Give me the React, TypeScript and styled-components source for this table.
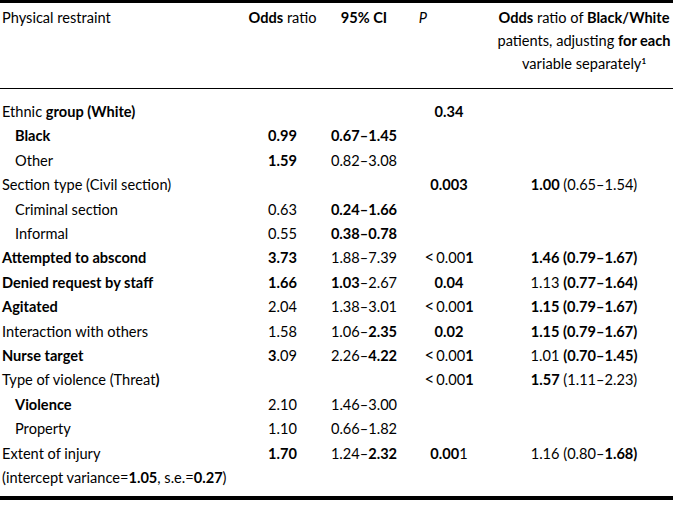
import * as React from "react";
import styled, { createGlobalStyle } from "styled-components";

const GlobalStyle = createGlobalStyle`
  html, body {
    margin: 0;
    padding: 0;
    background: #ffffff;
  }
  body {
    font-family: Lato, "Open Sans", "DejaVu Sans", sans-serif;
    color: #000000;
  }
`;

const Wrapper = styled.div`
  width: 673px;
`;

const Table = styled.table`
  width: 100%;
  table-layout: fixed;
  border-collapse: collapse;
  border-top: 3px solid #000000;
  border-bottom: 4px solid #000000;
  font-size: 14.6px;
`;

const HeadRow = styled.tr`
  border-bottom: 1px solid #000000;
`;

const HeadCell = styled.th<{ $align?: string; $italic?: boolean }>`
  font-weight: 400;
  font-style: ${(p) => (p.$italic ? "italic" : "normal")};
  text-align: ${(p) => p.$align || "center"};
  vertical-align: top;
  line-height: 23px;
  padding: 3px 2px 13px 2px;
`;

const Row = styled.tr<{ $first?: boolean; $last?: boolean }>`
  height: 24.4px;
  td {
    padding-top: ${(p) => (p.$first ? "11px" : "0")};
    padding-bottom: ${(p) => (p.$last ? "5px" : "0")};
  }
`;

const LabelCell = styled.td<{ $indent?: boolean }>`
  text-align: left;
  white-space: nowrap;
  line-height: 24.4px;
  padding-left: ${(p) => (p.$indent ? "15px" : "2px")} !important;
`;

const NumCell = styled.td`
  text-align: center;
  white-space: nowrap;
  line-height: 24.4px;
`;

const B = styled.span`
  font-weight: 700;
`;

const Less = styled.span`
  font-size: 17px;
  line-height: 0;
  margin-right: 2px;
`;

const Sup = styled.sup`
  font-size: 8px;
  font-weight: 700;
  vertical-align: 5px;
  line-height: 0;
`;

type RowData = {
  label: React.ReactNode;
  indent?: boolean;
  or?: React.ReactNode;
  ci?: React.ReactNode;
  p?: React.ReactNode;
  adj?: React.ReactNode;
};

const lt = (
  <>
    <Less>&lt;</Less>0.00<B>1</B>
  </>
);

const rows: RowData[] = [
  { label: <>Ethnic <B>group (White)</B></>, p: <B>0.34</B> },
  { label: <B>Black</B>, indent: true, or: <B>0.99</B>, ci: <B>0.67–1.45</B> },
  { label: "Other", indent: true, or: <B>1.59</B>, ci: "0.82–3.08" },
  {
    label: "Section type (Civil section)",
    p: <B>0.003</B>,
    adj: <><B>1.00</B> (0.65–1.54)</>,
  },
  { label: "Criminal section", indent: true, or: "0.63", ci: <B>0.24–1.66</B> },
  { label: "Informal", indent: true, or: "0.55", ci: <B>0.38–0.78</B> },
  {
    label: <B>Attempted to abscond</B>,
    or: <B>3.73</B>,
    ci: "1.88–7.39",
    p: lt,
    adj: <B>1.46 (0.79–1.67)</B>,
  },
  {
    label: <B>Denied request by staff</B>,
    or: <B>1.66</B>,
    ci: <><B>1.03</B>–2.67</>,
    p: <B>0.04</B>,
    adj: <>1.13 <B>(0.77–1.64)</B></>,
  },
  {
    label: <B>Agitated</B>,
    or: "2.04",
    ci: "1.38–3.01",
    p: lt,
    adj: <B>1.15 (0.79–1.67)</B>,
  },
  {
    label: "Interaction with others",
    or: "1.58",
    ci: <>1.06–<B>2.35</B></>,
    p: <B>0.02</B>,
    adj: <B>1.15 (0.79–1.67)</B>,
  },
  {
    label: <B>Nurse target</B>,
    or: <><B>3</B>.09</>,
    ci: <>2.26–<B>4.22</B></>,
    p: lt,
    adj: <>1.01 <B>(0.70–1.45)</B></>,
  },
  {
    label: <>Type of violence (Threat<B>)</B></>,
    p: lt,
    adj: <><B>1.57</B> (1.11–2.23)</>,
  },
  { label: <B>Violence</B>, indent: true, or: "2.10", ci: "1.46–3.00" },
  { label: "Property", indent: true, or: "1.10", ci: "0.66–1.82" },
  {
    label: "Extent of injury",
    or: <B>1.70</B>,
    ci: <>1.24–<B>2.32</B></>,
    p: <><B>0.00</B>1</>,
    adj: <>1.16 (0.80–<B>1.68)</B></>,
  },
  {
    label: (
      <>
        (intercept variance=<B>1.05</B>, s.e.=<B>0.27</B>)
      </>
    ),
  },
];

const App: React.FC = () => {
  return (
    <Wrapper>
      <GlobalStyle />
      <Table>
        <colgroup>
          <col style={{ width: 240 }} />
          <col style={{ width: 85 }} />
          <col style={{ width: 78 }} />
          <col style={{ width: 92 }} />
          <col style={{ width: 178 }} />
        </colgroup>
        <thead>
          <HeadRow>
            <HeadCell $align="left">Physical restraint</HeadCell>
            <HeadCell>
              <B>Odds</B> ratio
            </HeadCell>
            <HeadCell>
              <B>95% CI</B>
            </HeadCell>
            <HeadCell $align="left" $italic>
              &nbsp;&nbsp;&nbsp;&nbsp;P
            </HeadCell>
            <HeadCell>
              <B>Odds</B> ratio of <B>Black/White</B> patients, adjusting <B>for each</B>{" "}
              variable separately<Sup>1</Sup>
            </HeadCell>
          </HeadRow>
        </thead>
        <tbody>
          {rows.map((r, i) => (
            <Row key={i} $first={i === 0} $last={i === rows.length - 1}>
              <LabelCell $indent={r.indent}>{r.label}</LabelCell>
              <NumCell>{r.or}</NumCell>
              <NumCell>{r.ci}</NumCell>
              <NumCell>{r.p}</NumCell>
              <NumCell>{r.adj}</NumCell>
            </Row>
          ))}
        </tbody>
      </Table>
    </Wrapper>
  );
};

export default App;
